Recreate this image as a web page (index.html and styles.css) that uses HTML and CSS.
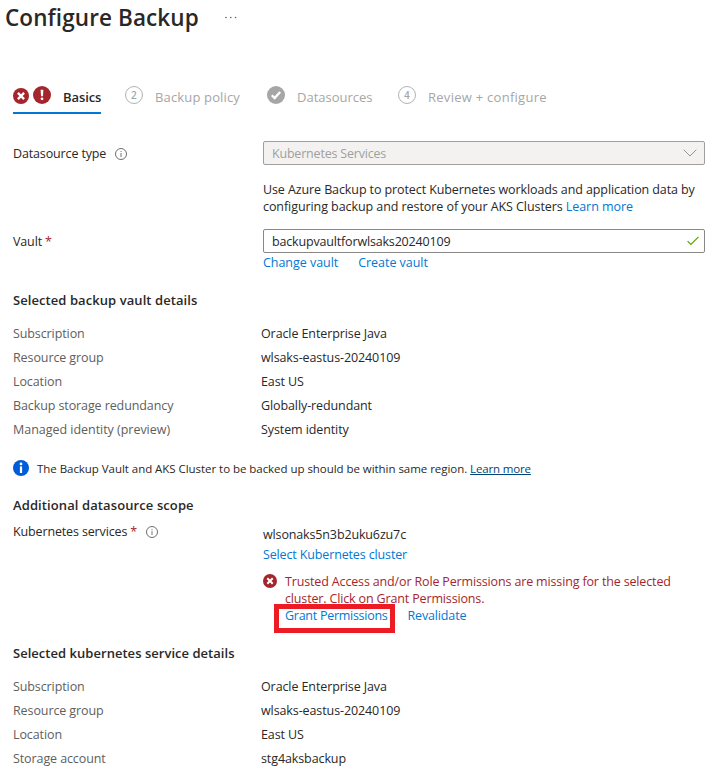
FILE: index.html
```html
<!DOCTYPE html>
<html lang="en">
<head>
<meta charset="utf-8">
<title>Configure Backup</title>
<link rel="stylesheet" href="styles.css">
</head>
<body>
<svg width="0" height="0" class="defs" aria-hidden="true">
  <symbol id="error" viewBox="0 0 16 16"><circle cx="8" cy="8" r="8" fill="#a4262c"/><path d="M4.9 4.9l6.2 6.2M11.1 4.9l-6.2 6.2" stroke="#fff" stroke-width="2.3"/></symbol>
  <symbol id="alert" viewBox="0 0 18 18"><circle cx="9" cy="9" r="9" fill="#a4262c"/><path d="M7.6 3.8h2.8l-.4 6.4H8z" fill="#fff"/><circle cx="9" cy="12.8" r="1.4" fill="#fff"/></symbol>
  <symbol id="hint" viewBox="0 0 12 12"><circle cx="6" cy="6" r="5.5" fill="none" stroke="#605e5c" stroke-width=".9"/><path d="M6 5v4" stroke="#797775"/><path d="M6 3v1" stroke="#797775"/></symbol>
</svg>
<header class="title-bar">
  <h1 class="title">Configure Backup</h1>
  <svg class="more" width="12" height="3" viewBox="0 0 12 3"><g fill="#605e5c"><circle cx="1" cy="1.5" r=".8"/><circle cx="5.8" cy="1.5" r=".8"/><circle cx="10.6" cy="1.5" r=".8"/></g></svg>
</header>
<nav class="tabs">
  <a class="tab tab-active">
    <svg class="tab-error" width="16" height="16"><use href="#error"/></svg>
    <svg class="tab-alert" width="18" height="18"><use href="#alert"/></svg>
    <span class="tab-text">Basics</span>
  </a>
  <a class="tab tab-policy"><span class="step">2</span><span class="tab-text">Backup policy</span></a>
  <a class="tab tab-sources">
    <svg class="done" width="18" height="18" viewBox="0 0 18 18"><circle cx="9" cy="9" r="9" fill="#a6a6a6"/><path d="M4.8 9.2l2.8 2.8 5.6-6" fill="none" stroke="#fff" stroke-width="2.3"/></svg>
    <span class="tab-text">Datasources</span>
  </a>
  <a class="tab tab-review"><span class="step">4</span><span class="tab-text">Review + configure</span></a>
</nav>
<main class="form">
  <div class="field-row">
    <label class="label"><span>Datasource type</span><svg class="hint" width="12" height="12"><use href="#hint"/></svg></label>
    <div class="control">
      <div class="input input-disabled"><span>Kubernetes Services</span><svg width="14" height="8" viewBox="0 0 14 8"><path d="M.7.7L7 7 13.3.7" fill="none" stroke="#979593" stroke-width="1"/></svg></div>
      <p class="help">Use Azure Backup to protect Kubernetes workloads and application data by<br><span class="help-end">configuring backup and restore of your AKS Clusters <a class="link">Learn more</a></span></p>
    </div>
  </div>
  <div class="field-row vault-row">
    <label class="label">Vault <span class="required">*</span></label>
    <div class="control">
      <div class="input"><span>backupvaultforwlsaks20240109</span><svg width="12" height="10" viewBox="0 0 12 10"><path d="M.6 5.1l3.3 3.4L11.5.8" fill="none" stroke="#57a300" stroke-width="1.2"/></svg></div>
      <div class="links vault-links"><a class="link">Change vault</a><a class="link">Create vault</a></div>
    </div>
  </div>
  <h2 class="heading">Selected backup vault details</h2>
  <dl class="details">
    <dt>Subscription</dt><dd>Oracle Enterprise Java</dd>
    <dt>Resource group</dt><dd>wlsaks-eastus-20240109</dd>
    <dt>Location</dt><dd>East US</dd>
    <dt>Backup storage redundancy</dt><dd>Globally-redundant</dd>
    <dt class="identity">Managed identity (preview)</dt><dd>System identity</dd>
  </dl>
  <div class="notice">
    <svg width="16" height="16" viewBox="0 0 16 16"><circle cx="8" cy="8" r="8" fill="#015cda"/><circle cx="8" cy="3.9" r="1.4" fill="#fff"/><path d="M6.9 6.4h2.2v6.6H6.9z" fill="#fff"/></svg>
    <p class="notice-text">The Backup Vault and AKS Cluster to be backed up should be within same region. <a class="notice-link">Learn more</a></p>
  </div>
  <h2 class="heading heading-scope">Additional datasource scope</h2>
  <div class="field-row cluster-row">
    <label class="label"><span>Kubernetes services <span class="required">*</span></span><svg class="hint" width="12" height="12"><use href="#hint"/></svg></label>
    <div class="control cluster">
      <div class="cluster-name">wlsonaks5n3b2uku6zu7c</div>
      <a class="link select-link">Select Kubernetes cluster</a>
      <div class="error">
        <svg width="14" height="14"><use href="#error"/></svg>
        <div>
          <p class="error-text">Trusted Access and/or Role Permissions are missing for the selected<br>cluster. Click on Grant Permissions.</p>
          <div class="links grant-links"><a class="link grant">Grant Permissions</a><a class="link">Revalidate</a></div>
        </div>
      </div>
    </div>
  </div>
  <h2 class="heading heading-service">Selected kubernetes service details</h2>
  <dl class="details service-details">
    <dt>Subscription</dt><dd>Oracle Enterprise Java</dd>
    <dt>Resource group</dt><dd>wlsaks-eastus-20240109</dd>
    <dt>Location</dt><dd>East US</dd>
    <dt>Storage account</dt><dd>stg4aksbackup</dd>
  </dl>
</main>
</body>
</html>
```
FILE: styles.css
```css
*, *::after { box-sizing: border-box; }
body {
  margin: 0;
  width: 721px;
  height: 775px;
  overflow: hidden;
  background: #fff;
  color: #292827;
  font: 12.5px/17px "Open Sans", "Noto Sans", sans-serif;
  letter-spacing: -.1px;
  white-space: nowrap;
}
h1, h2, p, dl, dd { margin: 0; }
svg { display: block; flex: none; }
.defs { position: absolute; }

.title-bar { display: flex; height: 36px; padding-left: 5px; }
.title { width: 220px; font-size: 22.5px; font-weight: 600; line-height: 36px; letter-spacing: .1px; }
.more { margin-top: 16px; }

.tabs { display: flex; height: 35px; margin: 43px 0 0 13px; color: #a6a6a6; font-size: 13px; letter-spacing: 0; }
.tab { display: flex; height: 35px; padding-top: 7px; }
.tab-text { line-height: 22px; }
.tab-active { width: 88px; border-bottom: 2px solid #0078d4; color: #292827; font-weight: 600; letter-spacing: -.08px; }
.tab-error { margin-top: 2px; }
.tab-alert { margin: 0 12px 0 4px; }
.tab-policy { width: 142px; margin-left: 24px; letter-spacing: .15px; }
.tab-sources { width: 131px; }
.tab-review { letter-spacing: .27px; }
.step { width: 18px; height: 18px; border: 1px solid #b3b3b3; border-radius: 50%; font-size: 10px; font-weight: 600; line-height: 16px; text-align: center; }
.step, .done { flex: none; margin-right: 12px; }

.form { padding: 27px 0 0 13px; }
.field-row { display: grid; grid-template-columns: 250px 442px; }
.label { display: flex; align-items: center; height: 24px; white-space: pre; letter-spacing: -.14px; }
.required { color: #a4262c; }
.hint { margin: 1px 0 0 9px; }
.input { display: flex; align-items: center; justify-content: space-between; height: 24px; padding: 0 5px 0 8px; border: 1px solid #8a8886; border-radius: 2px; letter-spacing: -.17px; }
.input-disabled { padding-right: 7px; border-color: #a19f9d; background: #f3f2f1; color: #a19f9d; letter-spacing: -.2px; }
.link { color: #0078d4; }
.help { margin-top: 16px; }
.help-end { letter-spacing: -.07px; }
.vault-row { margin-top: 14px; }
.links { display: flex; gap: 20px; }
.vault-links { margin-top: 1px; letter-spacing: -.04px; }

.heading { margin-top: 19px; font-size: 13px; font-weight: 600; line-height: 20px; letter-spacing: .07px; }
.details { display: grid; grid-template-columns: 248px auto; grid-auto-rows: 24px; margin-top: 12px; line-height: 24px; }
.details dt { color: #605e5c; }
.identity { letter-spacing: -.03px; }

.notice { display: flex; align-items: center; gap: 8px; height: 20px; margin-top: 16px; font-size: 11.5px; letter-spacing: -.045px; }
.notice-link { color: #004578; text-decoration: underline; letter-spacing: -.15px; }

.heading-scope { margin-top: 17px; letter-spacing: .1px; }
.cluster-row { margin-top: 4px; }
.cluster { padding-top: 7px; letter-spacing: -.14px; }
.cluster-name { height: 20px; }
.select-link { display: block; }
.error { display: flex; gap: 8px; margin-top: 10px; color: #a4262c; letter-spacing: -.15px; }
.error > svg { margin-top: 1px; }
.grant { position: relative; letter-spacing: -.27px; }
.grant::after { content: ""; position: absolute; left: -11px; top: -3px; width: 121px; height: 29px; border: 5px solid #ed1c24; }
.heading-service { margin-top: 19px; letter-spacing: .03px; }
```
